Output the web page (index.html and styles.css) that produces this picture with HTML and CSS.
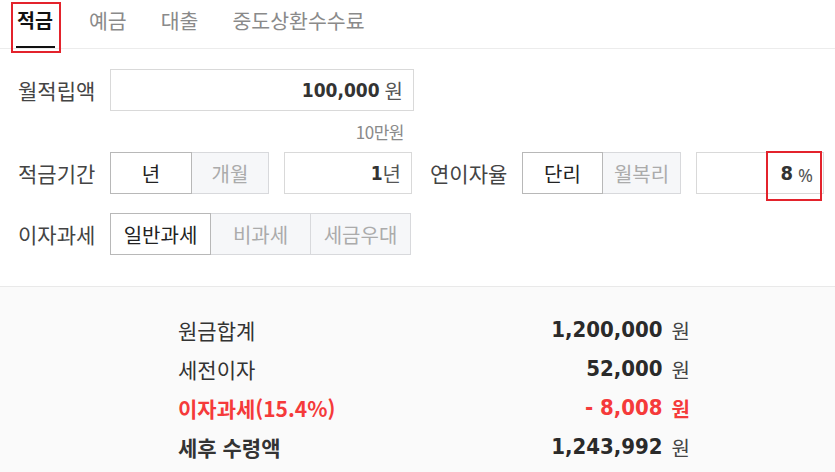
FILE: index.html
```html
<!DOCTYPE html>
<html lang="ko">
<head>
<meta charset="utf-8">
<title>적금 계산기</title>
<link rel="stylesheet" href="styles.css">
</head>
<body>
<div class="page">
  <nav class="tabs">
    <span class="tab active">적금</span>
    <span class="tab">예금</span>
    <span class="tab">대출</span>
    <span class="tab">중도상환수수료</span>
  </nav>

  <section class="form">
    <div class="row">
      <span class="label">월적립액</span>
      <div class="field field-wide"><b class="num">100,000</b><span class="unit sp">원</span></div>
    </div>
    <div class="hint-row"><span class="hint">10만원</span></div>
    <div class="row">
      <span class="label">적금기간</span>
      <div class="seg">
        <span class="opt on w82">년</span>
        <span class="opt w78">개월</span>
      </div>
      <div class="field field-mid"><b class="num">1</b><span class="unit">년</span></div>
      <span class="label label-2">연이자율</span>
      <div class="seg">
        <span class="opt on w81">단리</span>
        <span class="opt w79">월복리</span>
      </div>
      <div class="field field-mid"><b class="num num-rate">8</b><span class="pct">%</span></div>
    </div>
    <div class="row row-3">
      <span class="label">이자과세</span>
      <div class="seg">
        <span class="opt on w101">일반과세</span>
        <span class="opt w101">비과세</span>
        <span class="opt w101">세금우대</span>
      </div>
    </div>
  </section>

  <section class="result">
    <div class="res-row">
      <span class="res-label">원금합계</span>
      <span class="res-val"><b class="num-lg">1,200,000</b><span class="won">원</span></span>
    </div>
    <div class="res-row">
      <span class="res-label">세전이자</span>
      <span class="res-val"><b class="num-lg">52,000</b><span class="won">원</span></span>
    </div>
    <div class="res-row red">
      <span class="res-label strong">이자과세(15.4%)</span>
      <span class="res-val"><b class="num-lg">- 8,008</b><span class="won strong">원</span></span>
    </div>
    <div class="res-row">
      <span class="res-label strong">세후 수령액</span>
      <span class="res-val"><b class="num-lg">1,243,992</b><span class="won">원</span></span>
    </div>
  </section>

  <div class="mark mark-tab"></div>
  <div class="mark mark-rate"></div>
</div>
</body>
</html>
```

FILE: styles.css
```css
* { box-sizing: border-box; }

html, body {
  margin: 0;
  padding: 0;
  background: #ffffff;
}

body {
  font-family: "Noto Sans CJK KR", "Noto Sans", sans-serif;
  color: #333;
  font-size: 20px;
}

.page {
  position: relative;
  width: 835px;
  height: 472px;
  overflow: hidden;
}

/* Tabs */
.tabs {
  display: flex;
  gap: 34px;
  padding-left: 16px;
  height: 49px;
  border-bottom: 1px solid #ececec;
}

.tab {
  height: 48px;
  padding-top: 6px;
  font-size: 20.5px;
  line-height: 28px;
  color: #8a8a8a;
  white-space: nowrap;
}

.tab.active {
  color: #111;
  font-weight: 700;
  font-size: 19.5px;
  border-bottom: 2px solid #111;
  padding-left: 1px;
  width: 39px;
}

/* Form */
.form {
  padding: 20px 0 31px 18px;
  border-bottom: 1px solid #e9e9e9;
}

.row {
  display: flex;
  align-items: center;
  height: 42px;
}

.row-3 { margin-top: 19px; }

.label {
  width: 92px;
  color: #444;
  font-size: 21px;
  line-height: 28px;
  white-space: nowrap;
}

.label-2 {
  margin-left: 18px;
}

.field {
  height: 42px;
  border: 1px solid #d9d9d9;
  background: #fff;
  display: flex;
  align-items: center;
  justify-content: flex-end;
  padding-right: 10px;
  color: #333;
}

.field-wide { width: 304px; }
.field-mid { width: 128px; margin-left: 15px; }

.num {
  font-family: "DejaVu Sans Condensed", "DejaVu Sans", sans-serif;
  font-stretch: condensed;
  font-weight: 700;
  font-size: 19px;
  color: #333;
}

.num-rate { font-size: 20px; }

.unit {
  font-size: 20px;
  color: #555;
  line-height: 1;
  padding-top: 2px;
}

.unit.sp { margin-left: 5px; }

.pct {
  font-family: "Noto Sans", sans-serif;
  font-size: 18px;
  color: #555;
  margin-left: 5px;
  padding-top: 3px;
}

.hint-row {
  width: 396px;
  height: 41px;
  display: flex;
  justify-content: flex-end;
  align-items: center;
  padding-right: 10px;
}

.hint {
  font-size: 17px;
  color: #8a8a8a;
  letter-spacing: -0.5px;
}

/* Segmented buttons */
.seg {
  display: flex;
  height: 42px;
}

.opt {
  height: 42px;
  display: flex;
  align-items: center;
  justify-content: center;
  border: 1px solid #d8d9dc;
  background: #f6f7f9;
  color: #ababab;
  font-size: 20px;
  margin-left: -1px;
  position: relative;
}

.opt:first-child { margin-left: 0; }

.opt.on {
  background: #fff;
  color: #222;
  border-color: #b8b8b8;
  z-index: 1;
}

.w82 { width: 82px; }
.w78 { width: 78px; }
.w81 { width: 81px; }
.w79 { width: 79px; }
.w101 { width: 101px; }

/* Results */
.result {
  background: #fafafa;
  height: 187px;
  padding: 23px 0 0 178px;
}

.res-row {
  width: 512px;
  height: 39px;
  display: flex;
  align-items: center;
  justify-content: space-between;
}

.res-label {
  font-size: 21px;
  color: #333;
}

.strong { font-weight: 700; }

.res-val {
  display: flex;
  align-items: center;
}

.num-lg {
  font-family: "DejaVu Sans Condensed", "DejaVu Sans", sans-serif;
  font-stretch: condensed;
  font-weight: 700;
  font-size: 22px;
  color: #2a2a2a;
}

.won {
  font-size: 20px;
  color: #444;
  margin-left: 9px;
  padding-top: 2px;
}

.red .res-label,
.red .num-lg,
.red .won {
  color: #f53a3a;
}

/* Red annotation boxes laid over the UI */
.mark {
  position: absolute;
  border: 2px solid #e3232c;
  pointer-events: none;
}

.mark-tab {
  left: 11px;
  top: 2px;
  width: 50px;
  height: 51px;
}

.mark-rate {
  left: 766px;
  top: 151px;
  width: 56px;
  height: 50px;
}
```
